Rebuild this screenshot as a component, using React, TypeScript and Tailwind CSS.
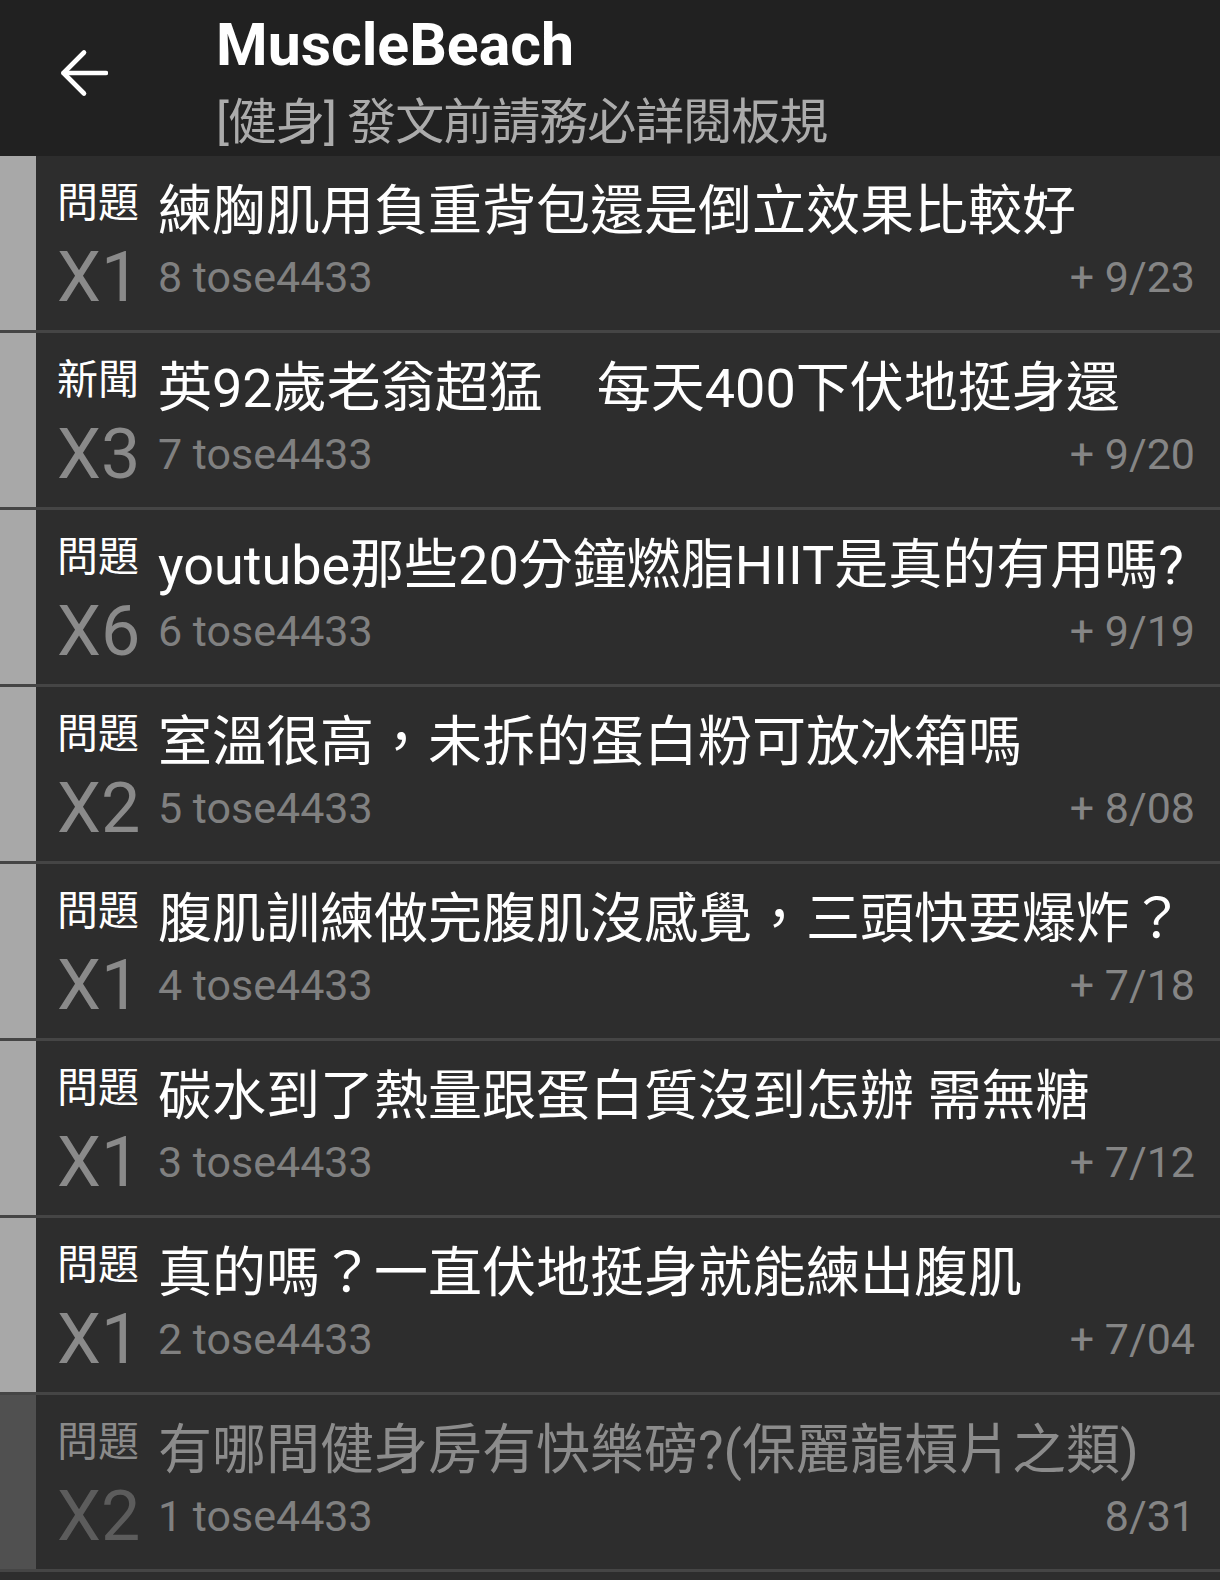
import React from "react";

type Row = { tag: string; title: string; x: string; n: string; date: string; read?: boolean };

const rows: Row[] = [
  { tag: "問題", title: "練胸肌用負重背包還是倒立效果比較好", x: "X1", n: "8", date: "+ 9/23" },
  { tag: "新聞", title: "英92歲老翁超猛　每天400下伏地挺身還", x: "X3", n: "7", date: "+ 9/20" },
  { tag: "問題", title: "youtube那些20分鐘燃脂HIIT是真的有用嗎?", x: "X6", n: "6", date: "+ 9/19" },
  { tag: "問題", title: "室溫很高，未拆的蛋白粉可放冰箱嗎", x: "X2", n: "5", date: "+ 8/08" },
  { tag: "問題", title: "腹肌訓練做完腹肌沒感覺，三頭快要爆炸？", x: "X1", n: "4", date: "+ 7/18" },
  { tag: "問題", title: "碳水到了熱量跟蛋白質沒到怎辦 需無糖", x: "X1", n: "3", date: "+ 7/12" },
  { tag: "問題", title: "真的嗎？一直伏地挺身就能練出腹肌", x: "X1", n: "2", date: "+ 7/04" },
  { tag: "問題", title: "有哪間健身房有快樂磅?(保麗龍槓片之類)", x: "X2", n: "1", date: "8/31", read: true },
];

const font = { fontFamily: 'Roboto, "Noto Sans CJK TC", "Noto Sans", sans-serif' };

export default function App() {
  return (
    <div className="w-[1220px] h-[1580px] bg-[#2d2d2d] overflow-hidden" style={font}>
      <div className="h-[156px] bg-[#212121] flex items-start">
        <div className="w-[216px] pt-[49px] pl-[60px]">
          <svg width="48" height="48" viewBox="0 0 48 48" fill="none" stroke="#ffffff" strokeWidth="4.6" strokeLinecap="round" strokeLinejoin="round">
            <path d="M46 24H3.5" />
            <path d="M24 3.5L3.5 24L24 44.5" />
          </svg>
        </div>
        <div className="flex flex-col pt-[12px]">
          <div className="text-[59px] leading-[66px] font-bold text-white">MuscleBeach</div>
          <div className="mt-[13px] text-[49px] leading-[64px] tracking-[-1px] text-[#ababab] whitespace-nowrap">[健身] 發文前請務必詳閱板規</div>
        </div>
      </div>
      {rows.map((r, i) => (
        <div key={i} className="h-[177px] flex border-b-[3px] border-[#454545]">
          <div className={`w-[36px] ${r.read ? "bg-[#505050]" : "bg-[#a8a8a8]"}`} />
          <div className="flex-1 min-w-0 pl-[21px] pr-[25px] pt-[24px]">
            <div className="h-[64px] flex items-start">
              <div className={`w-[101px] shrink-0 pt-[3px] text-[41px] leading-none ${r.read ? "text-[#8a8a8a]" : "text-white"}`}>{r.tag}</div>
              <div className={`flex-1 min-w-0 whitespace-nowrap overflow-hidden text-[54px] leading-[64px] ${r.read ? "text-[#8c8c8c]" : "text-white"}`}>{r.title}</div>
            </div>
            <div className="h-[66px] flex items-center">
              <div className={`w-[101px] shrink-0 text-[70px] leading-none ${r.read ? "text-[#5c5c5c]" : "text-[#8a8a8a]"}`}>{r.x}</div>
              <div className="flex-1 text-[43px] leading-none text-[#808080]">{r.n} tose4433</div>
              <div className="text-[43px] leading-none text-[#858585]">{r.date}</div>
            </div>
          </div>
        </div>
      ))}
    </div>
  );
}
